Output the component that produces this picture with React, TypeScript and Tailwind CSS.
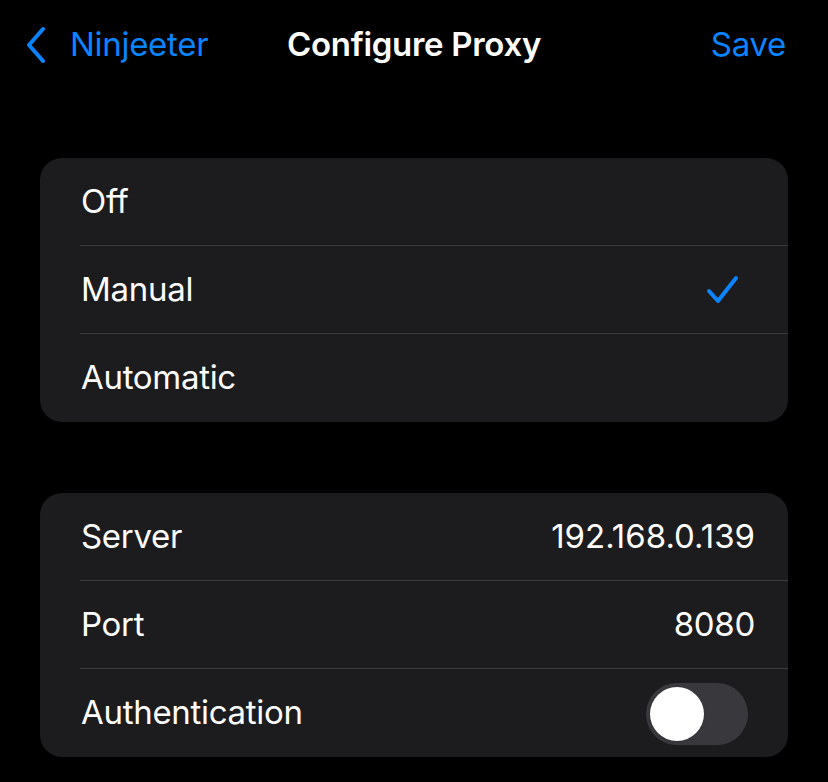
import React, { useState } from 'react';

const font = { fontFamily: 'Inter, "Noto Sans", sans-serif' };

function Row({ label, children, last }: { label: string; children?: React.ReactNode; last?: boolean }) {
    return (
        <div className="relative flex h-[88px] items-center pl-[41px] pr-[33px]">
            <span className="flex-1 text-[33px] tracking-[-0.3px] text-white">{label}</span>
            {children}
            {!last && <div className="absolute bottom-0 left-[40px] right-0 h-px bg-[#3a3a3c]" />}
        </div>
    );
}

function Check() {
    return (
        <svg width="34" height="34" viewBox="0 0 34 34" className="mr-[15px]">
            <path d="M3 18 L12 28 L30 5" fill="none" stroke="#0a84ff" strokeWidth="4" strokeLinecap="round" strokeLinejoin="round" />
        </svg>
    );
}

function Toggle({ on, onChange }: { on: boolean; onChange: (v: boolean) => void }) {
    return (
        <button
            onClick={() => onChange(!on)}
            className={`mr-[7px] mt-[2px] flex h-[62px] w-[102px] items-center rounded-full p-[4px] ${on ? 'justify-end bg-[#30d158]' : 'justify-start bg-[#39393d]'}`}
        >
            <span className="h-[54px] w-[54px] rounded-full bg-white shadow" />
        </button>
    );
}

export default function App() {
    const [mode, setMode] = useState('Manual');
    const [auth, setAuth] = useState(false);

    return (
        <div className="min-h-[782px] w-[828px] bg-black" style={font}>
            {/* nav bar */}
            <div className="grid h-[90px] grid-cols-[1fr_auto_1fr] items-center px-[26px]">
                <div className="flex min-w-0 items-center text-[#0a84ff]">
                    <svg width="20" height="36" viewBox="0 0 20 36">
                        <path d="M17 2 L3 18 L17 34" fill="none" stroke="#0a84ff" strokeWidth="4" strokeLinecap="round" strokeLinejoin="round" />
                    </svg>
                    <span className="ml-[24px] text-[33px] tracking-[-0.3px]">Ninjeeter</span>
                </div>
                <span className="text-[33px] font-semibold tracking-[-0.3px] text-white">Configure Proxy</span>
                <div className="flex min-w-0 justify-end pr-[16px]">
                    <span className="text-[33px] tracking-[-0.3px] text-[#0a84ff]">Save</span>
                </div>
            </div>

            <div className="px-[40px] pt-[68px]">
                <div className="overflow-hidden rounded-[22px] bg-[#1c1c1e]">
                    {['Off', 'Manual', 'Automatic'].map((m, i) => (
                        <div key={m} onClick={() => setMode(m)}>
                            <Row label={m} last={i === 2}>
                                {mode === m && <Check />}
                            </Row>
                        </div>
                    ))}
                </div>

                <div className="mt-[71px] overflow-hidden rounded-[22px] bg-[#1c1c1e]">
                    <Row label="Server">
                        <span className="text-[33px] tracking-[0px] text-white">192.168.0.139</span>
                    </Row>
                    <Row label="Port">
                        <span className="text-[33px] tracking-[-0.3px] text-white">8080</span>
                    </Row>
                    <Row label="Authentication" last>
                        <Toggle on={auth} onChange={setAuth} />
                    </Row>
                </div>
            </div>
        </div>
    );
}
